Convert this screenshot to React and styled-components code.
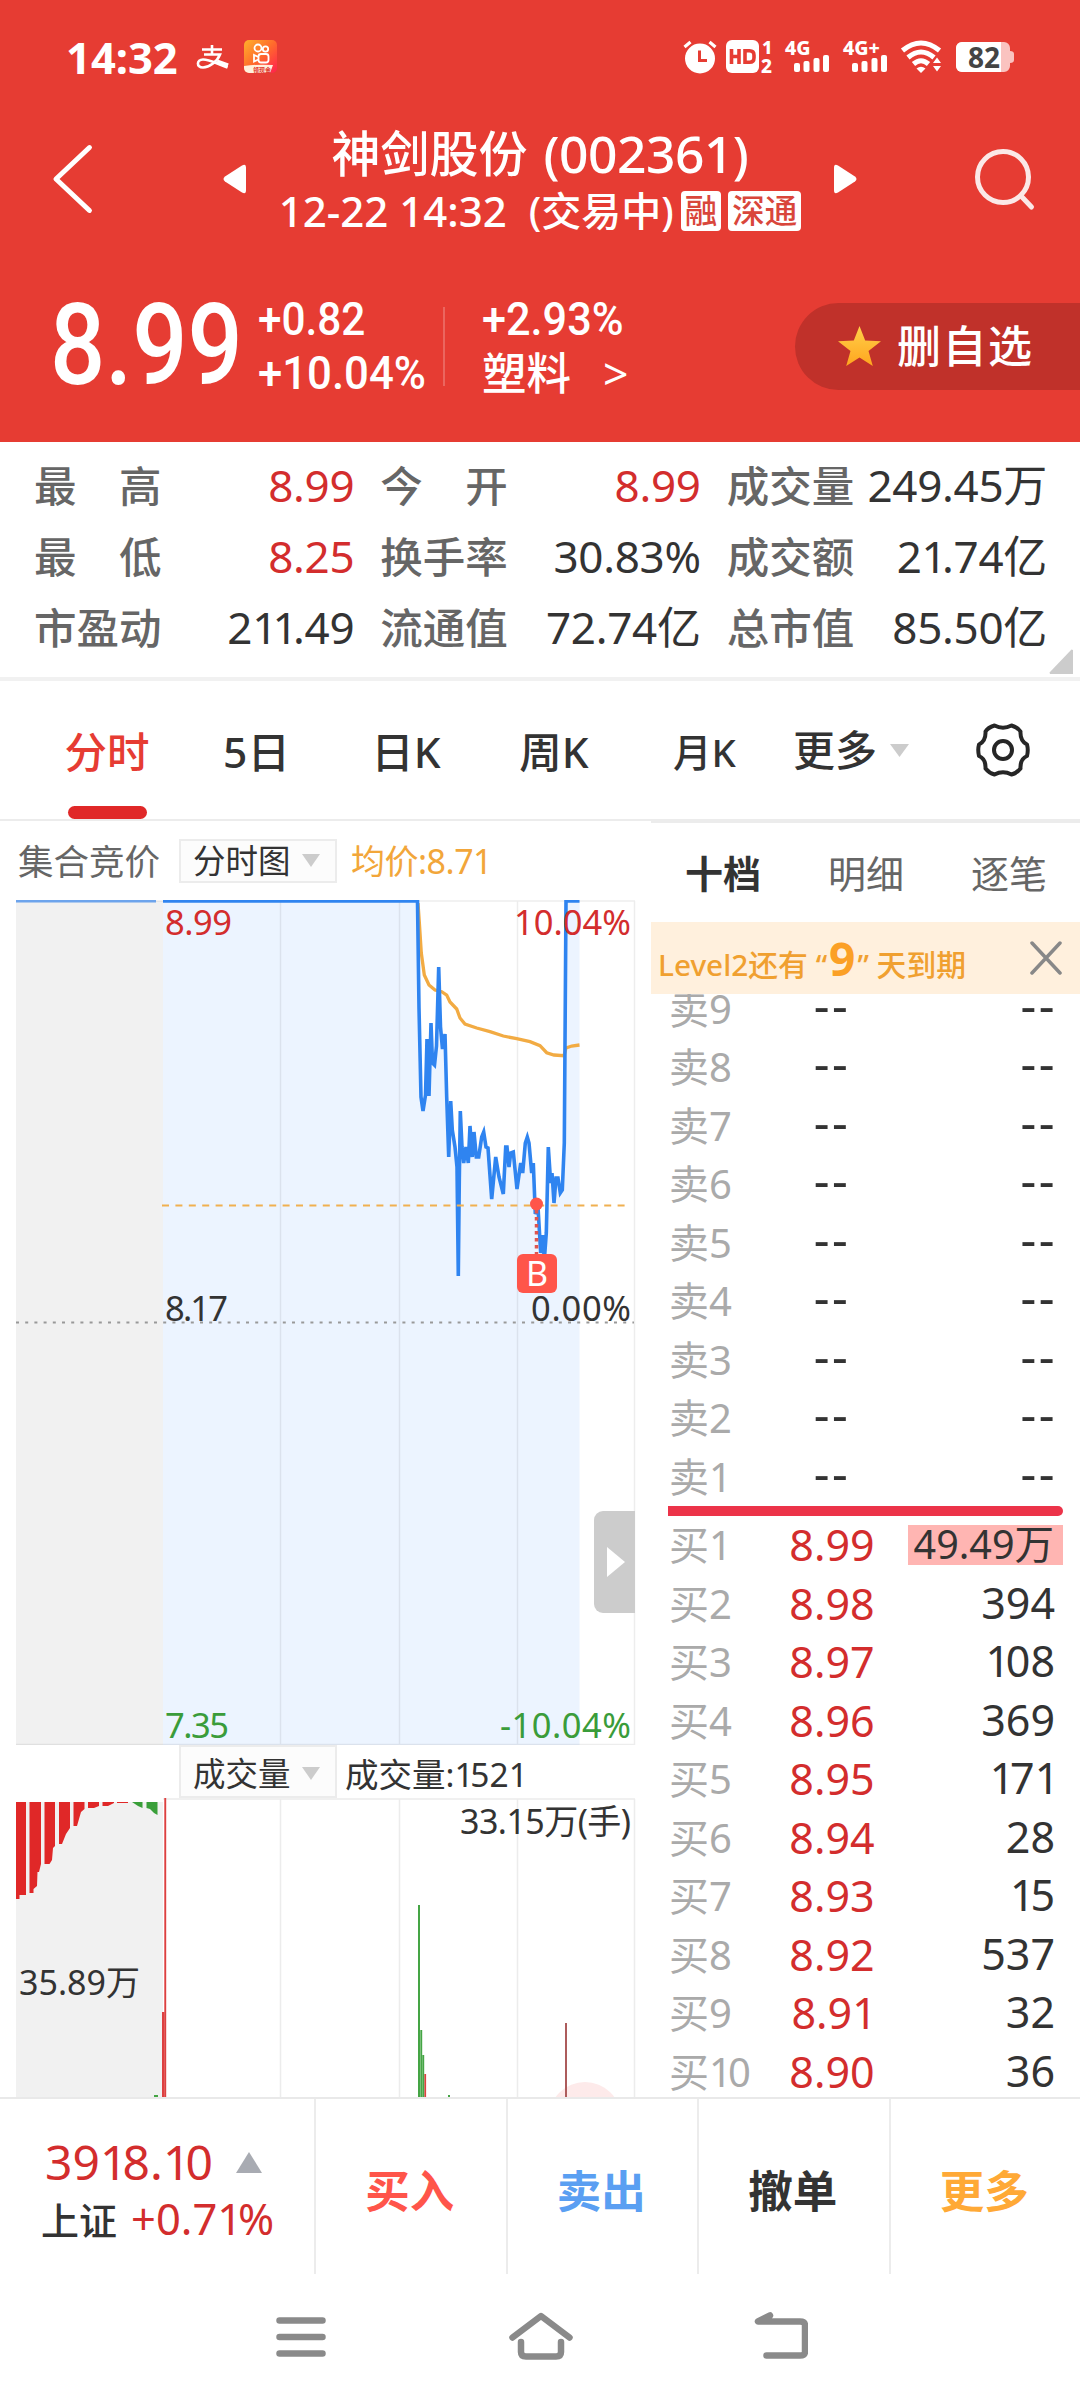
import React from "react"
import styled, { createGlobalStyle } from "styled-components"

const RED = "#d32d2d"
const GREEN = "#3a9c3a"
const INK = "#333333"
const MUTED = "#666666"

const stats = [
  { label: "最　高", value: "8.99", color: RED },
  { label: "今　开", value: "8.99", color: RED },
  { label: "成交量", value: "249.45万" },
  { label: "最　低", value: "8.25", color: RED },
  { label: "换手率", value: "30.83%" },
  { label: "成交额", value: "21.74亿" },
  { label: "市盈动", value: "211.49" },
  { label: "流通值", value: "72.74亿" },
  { label: "总市值", value: "85.50亿" },
]

const asks = ["卖9", "卖8", "卖7", "卖6", "卖5", "卖4", "卖3", "卖2", "卖1"]

const bids = [
  { label: "买1", price: "8.99", qty: "49.49万", hot: true },
  { label: "买2", price: "8.98", qty: "394" },
  { label: "买3", price: "8.97", qty: "108" },
  { label: "买4", price: "8.96", qty: "369" },
  { label: "买5", price: "8.95", qty: "171" },
  { label: "买6", price: "8.94", qty: "28" },
  { label: "买7", price: "8.93", qty: "15" },
  { label: "买8", price: "8.92", qty: "537" },
  { label: "买9", price: "8.91", qty: "32" },
  { label: "买10", price: "8.90", qty: "36" },
]

// chart series, x/y in page units; the svg viewBox starts at 16,900
const priceLine =
  "163,901 417.5,901 419,1008 421,1097 423,1111 425.5,1095 427,1039 429,1096 431,1023 432.5,1063 434.5,1065 436.5,1046 438.7,967 440.5,1027 442.5,1049 445,1034 446.7,1097 448.7,1157 450.7,1101 452.3,1130 455,1147 457,1167 458.3,1276 459.3,1180 460.3,1111 462,1147 463.7,1163 466,1147 468.3,1163 470,1126 472.3,1157 474,1132 476.3,1157 478.7,1157 481.7,1137 483.7,1132 486,1147 488,1148 491.7,1199 495.7,1157 499,1177 503.3,1194 505.7,1147 507,1147 509,1167 510.7,1153 513.3,1152 517,1189 520.7,1163 522.7,1173 525.3,1143 527.3,1137 529,1143 531.7,1173 533.3,1163 535.3,1214 538,1207 540.7,1253 542.7,1235 544.3,1260 546.3,1233 548.3,1147 550.7,1183 552,1173 554,1203 556,1178 558,1178 560.3,1193 562.3,1190 564.3,1143 566,901 579.5,901"

const avgLine =
  "418,903 419.5,925 421.3,953 424.3,975 429,985 435,990 441.7,991.7 446.7,995 450,1002 456.7,1009 460,1018 465,1024 476.7,1028 490,1031.7 503.3,1036 516.7,1038.7 530,1041.7 540,1045.7 546.7,1052.7 554,1055 564,1055.7 566,1048 571.7,1046 579.5,1045"

const auctionBars = [
  { color: "#e02828", points: "16,1802 26,1802 26,1895 19.5,1895 19.5,1899 16,1899" },
  { color: "#e02828", points: "29.5,1802 41,1802 41,1864 39,1872 37.5,1872 37,1886 33.5,1889 33.5,1893 29.5,1893" },
  { color: "#e02828", points: "44.5,1802 55,1802 55,1846 53,1848 52,1860 49.5,1864 44.5,1864" },
  { color: "#e02828", points: "59,1802 70,1802 70,1828 66,1834 62,1844 59,1844" },
  { color: "#e02828", points: "73.5,1802 84.5,1802 84.5,1809 81,1812 77,1826 73.5,1826" },
  { color: "#e02828", points: "88,1802 99,1802 99,1806 94,1808 88,1808" },
  { color: "#e02828", points: "102.5,1802 114,1802 114,1803 108,1806 102.5,1806" },
  { color: "#e02828", points: "117,1802 128,1802 128,1803 117,1803" },
  { color: "#3a9f3a", points: "132,1802 142.5,1802 142.5,1808 138,1806" },
  { color: "#3a9f3a", points: "146.5,1802 157.5,1802 157.5,1815 154,1813 150,1809 146.5,1808" },
]

// The digit 1 is set tighter than its advance width
const Digits = ({ children }) =>
  children.split(/(1)/).map((part, i) => (part === "1" ? <One key={i}>1</One> : part))

const GlobalStyle = createGlobalStyle`
  body {
    margin: 0;
    background: #ffffff;
    font-family: "Noto Sans", "Noto Sans CJK SC", sans-serif;
    font-weight: 500;
    color: ${INK};
  }
  * {
    box-sizing: border-box;
  }
`

const One = styled.span`
  margin-right: -0.1em;
`

const Screen = styled.div`
  width: 1080px;
  height: 2400px;
  overflow: hidden;
  display: flex;
  flex-direction: column;
  white-space: nowrap;
`

const Header = styled.header`
  height: 442px;
  background: #e63c33;
  color: #ffffff;
  display: flex;
  flex-direction: column;
`

const StatusBar = styled.div`
  height: 114px;
  padding: 0 66px 0 66px;
  display: flex;
  align-items: center;
`

const Clock = styled.span`
  width: 131px;
  font-size: 43.5px;
  font-weight: 700;
  line-height: 58px;
`

const StatusIcons = styled.div`
  margin-left: auto;
  display: flex;
  align-items: center;
`

const TitleBar = styled.div`
  height: 130px;
  padding: 0 44px 0 50px;
  display: flex;
  align-items: center;
`

const TitleBlock = styled.div`
  width: 587px;
  padding-top: 3px;
  display: flex;
  flex-direction: column;
  align-items: center;
`

const StockName = styled.div`
  height: 61px;
  display: flex;
  align-items: center;
  gap: 16px;
  font-size: 49px;
  line-height: 61px;
`

const StockCode = styled.span`
  font-size: 51.5px;
  letter-spacing: -0.5px;
`

const SubTitle = styled.div`
  height: 54px;
  display: flex;
  align-items: center;
  font-size: 42px;
  line-height: 54px;
`

const TradeState = styled.span`
  margin: 0 7px 0 22px;
  font-size: 40px;
`

const Badge = styled.span`
  height: 40px;
  margin-right: 7px;
  padding: 0 4px;
  border-radius: 4px;
  background: #ffffff;
  color: #d9463b;
  font-size: 32.5px;
  line-height: 39px;

  &:last-child {
    margin-right: 0;
  }
`

const PriceBar = styled.div`
  height: 86px;
  margin-top: 59px;
  display: flex;
  align-items: center;
`

const BigPrice = styled.div`
  width: 258px;
  padding-left: 50px;

  span {
    display: inline-block;
    font-family: Roboto, sans-serif;
    font-size: 113px;
    font-weight: 500;
    line-height: 88px;
    transform: scaleX(0.86);
    transform-origin: left center;
  }
`

const ChangeColumn = styled.div`
  width: ${(p) => p.$width}px;
  display: flex;
  flex-direction: column;
`

const ChangeLine = styled.span`
  height: 54px;
  font-family: Roboto, "Noto Sans CJK SC", sans-serif;
  font-size: 46.5px;
  font-weight: 500;
  line-height: 54px;
  transform: scaleX(${(p) => p.$stretch});
  transform-origin: left center;
`

const Sector = styled.span`
  height: 54px;
  display: flex;
  gap: 32px;
  font-size: 44.5px;
  line-height: 54px;

  span {
    font-weight: 400;
  }
`

const HeaderRule = styled.span`
  width: 2px;
  height: 79px;
  margin-right: 37px;
  background: rgba(255, 255, 255, 0.22);
`

const FavoriteButton = styled.button`
  width: 285px;
  height: 87px;
  margin-left: auto;
  padding: 0 0 0 43px;
  border: 0;
  border-radius: 44px 0 0 44px;
  background: #c0312a;
  color: #ffffff;
  display: flex;
  align-items: center;
  gap: 16px;
  font-family: inherit;
  font-size: 44px;
  font-weight: 500;
  letter-spacing: 1.5px;
  line-height: 60px;
`

const StatsPanel = styled.section`
  height: 239px;
  padding: 8px 33px 0 34px;
  border-bottom: 4px solid #f1f1f1;
  display: grid;
  grid-template-columns: repeat(3, 1fr);
  grid-auto-rows: 71px;
  column-gap: 26px;
  position: relative;
`

const StatCell = styled.div`
  display: flex;
  align-items: center;
  justify-content: space-between;
  line-height: 71px;
`

const StatLabel = styled.span`
  color: ${MUTED};
  font-size: 42.5px;
`

const StatValue = styled.span`
  color: ${(p) => p.$color || INK};
  font-size: 44px;
  font-weight: 400;
  letter-spacing: -0.3px;
`

const Corner = styled.svg`
  position: absolute;
  right: 7px;
  bottom: 3px;
`

const PeriodTabs = styled.nav`
  height: 140px;
  padding-left: 32px;
  border-bottom: 2px solid #ececec;
  display: flex;
`

const PeriodTab = styled.span`
  width: ${(p) => p.$width || 150}px;
  display: flex;
  flex-direction: column;
  align-items: center;
  color: ${(p) => (p.$active ? "#e63c33" : INK)};
  font-size: ${(p) => p.$size || 42.5}px;
  line-height: 142px;
`

const TabLine = styled.span`
  width: 79px;
  height: 13px;
  margin-top: -17px;
  border-radius: 7px;
  background: #e02828;
`

const MoreTab = styled.span`
  width: 138px;
  margin-left: 11px;
  display: flex;
  align-items: center;
  gap: 13px;
  font-size: 42px;
  line-height: 142px;
`

const SettingsTab = styled.span`
  margin: 41px 0 0 44px;
`

const Body = styled.main`
  height: 1276px;
  display: flex;
`

const ChartColumn = styled.section`
  width: 651px;
  overflow: hidden;
  position: relative;
`

const ChartToolbar = styled.div`
  height: 79px;
  padding-left: 18px;
  display: flex;
  align-items: center;
`

const AuctionTitle = styled.span`
  width: 161px;
  color: ${MUTED};
  font-size: 35.5px;
  font-weight: 400;
  line-height: 46px;
`

const Select = styled.span`
  width: 158px;
  height: ${(p) => p.$height}px;
  padding: ${(p) => p.$shift || 0}px 15px 0 12px;
  border: 2px solid #ececec;
  background: #fcfcfc;
  display: flex;
  align-items: center;
  justify-content: space-between;
  font-size: 32.5px;
  font-weight: 400;
  line-height: 42px;
`

const AvgPrice = styled.span`
  margin-left: 14px;
  color: #f2a63a;
  font-size: 34px;
  font-weight: 400;
  line-height: 46px;
  letter-spacing: -0.5px;
`

const VolumeToolbar = styled.div`
  height: 53px;
  padding-left: 179px;
  display: flex;
  align-items: center;
`

const VolumeText = styled.span`
  margin: 5px 0 0 8px;
  font-size: 33.5px;
  font-weight: 400;
  line-height: 46px;
`

const ChartSvg = styled.svg`
  display: block;
  margin-left: 16px;
  overflow: hidden;
  font-weight: 400;
`

const Expander = styled.button`
  position: absolute;
  left: 594px;
  top: 690px;
  width: 41px;
  height: 102px;
  padding: 0 0 0 13px;
  border: 0;
  border-radius: 9px 0 0 9px;
  background: #cccccc;
  display: flex;
  align-items: center;
`

const OrderBook = styled.section`
  width: 429px;
  height: 1276px;
  overflow: hidden;
  display: flex;
  flex-direction: column;
`

const BookTabs = styled.div`
  height: 101px;
  padding: 0 0 0 34px;
  border-top: 2px solid #ececec;
  display: flex;
`

const BookTab = styled.span`
  width: 143px;
  flex-shrink: 0;
  color: ${(p) => (p.$active ? INK : MUTED)};
  font-size: 38px;
  font-weight: ${(p) => (p.$active ? 700 : 400)};
  line-height: 101px;
`

const Notice = styled.div`
  height: 72px;
  flex-shrink: 0;
  padding: 0 18px 0 7px;
  background: #fff0dd;
  color: #f0a030;
  display: flex;
  align-items: center;
  justify-content: space-between;
  font-size: 29.8px;

  p {
    margin: 6px 0 0;
    line-height: 60px;
  }

  b {
    margin: 0 2px;
    color: #fba026;
    font-size: 46px;
    line-height: 60px;
  }
`

const AskList = styled.div`
  height: 512px;
  overflow: hidden;
  flex-shrink: 0;
  display: flex;
  flex-direction: column;
  justify-content: flex-end;
`

const BookRow = styled.div`
  height: 58.5px;
  flex-shrink: 0;
  padding: 0 17px 0 18px;
  display: grid;
  grid-template-columns: 110px 106px 1fr;
  align-items: center;
  line-height: 58px;
`

const Level = styled.span`
  color: #aaaaaa;
  font-size: 40px;
  font-weight: 400;
`

const Price = styled.span`
  color: ${RED};
  font-size: 43px;
  font-weight: 400;
  text-align: center;
`

const Quantity = styled.span`
  justify-self: end;
  height: 40px;
  padding: 0 ${(p) => (p.$hot ? 9 : 8)}px 0 6px;
  background: ${(p) => (p.$hot ? "#ffb5b2" : "none")};
  font-size: ${(p) => (p.$hot ? 39.5 : 43)}px;
  font-weight: 400;
  line-height: 38px;
`

const Blank = styled.span`
  justify-self: ${(p) => p.$align};
  padding: 0 ${(p) => (p.$align === "end" ? 6 : 0)}px 9px 0;
  font-size: 49px;
  font-weight: 400;
  line-height: 45px;
  letter-spacing: 2.5px;
`

const Spread = styled.div`
  height: 10px;
  flex-shrink: 0;
  margin: 0 17px 0;
  border-radius: 0 5px 5px 0;
  background: #ec3349;
`

const TradeBar = styled.footer`
  height: 177px;
  border-top: 2px solid #e9e9e9;
  display: flex;
`

const IndexCell = styled.div`
  width: 314px;
  padding: 35px 0 0 45px;
`

const IndexValue = styled.div`
  display: flex;
  align-items: center;
  gap: 23px;
  color: ${RED};
  font-size: 48px;
  font-weight: 400;
  line-height: 56px;
`

const IndexChange = styled.div`
  margin-left: -4px;
  font-size: 38px;
  line-height: 57px;

  > span {
    margin-left: 14px;
    color: ${RED};
    font-size: 43.5px;
    font-weight: 400;
  }
`

const TradeButton = styled.button`
  flex: 1;
  padding: 4px 2px 0 0;
  border: 0;
  border-left: 2px solid #ececec;
  background: none;
  color: ${(p) => p.$color};
  font-family: inherit;
  font-size: 44.5px;
  font-weight: 700;
`

const NavBar = styled.div`
  height: 125px;
  padding-left: 276px;
  display: flex;
  align-items: center;
`

const NavIcon = styled.svg`
  margin-right: ${(p) => p.$gap || 0}px;
  fill: none;
  stroke: #8a8a8a;
  stroke-width: 6.5;
  stroke-linecap: round;
  stroke-linejoin: round;
`

const StatusIcon = styled.svg`
  margin-left: ${(p) => p.$gap || 0}px;
  overflow: visible;
`

const SignalText = styled.text`
  fill: #ffffff;
  font-family: "Noto Sans", sans-serif;
  font-weight: 800;
`

const AlipayIcon = () => (
  <StatusIcon width="32" height="26" viewBox="0 0 32 26" fill="none" stroke="#fff">
    <path d="M5 5.5h20M15 1v9" strokeWidth="2.6" />
    <path d="M7 10.5h16C20 18 12 23.5 6 23.5c-7 0-6.5-8 0-8 7 0 13 4 24.5 8" strokeWidth="2.6" />
    <path d="M20 17.5l11 4" strokeWidth="4" />
  </StatusIcon>
)

const KuaishouIcon = () => (
  <StatusIcon $gap={15} width="34" height="34" viewBox="0 0 34 34">
    <defs>
      <linearGradient id="ks" x1="0" y1="0" x2="1" y2="1">
        <stop offset="0" stopColor="#ffb12b" />
        <stop offset="0.5" stopColor="#ff6a2c" />
        <stop offset="1" stopColor="#ff1f4f" />
      </linearGradient>
    </defs>
    <rect width="33" height="33" rx="5" fill="url(#ks)" />
    <path d="M0 26q14-2 29-1l-3 8H5a5 5 0 0 1-5-5z" fill="#fff0dc" />
    <g fill="none" stroke="#fff" strokeWidth="1.8">
      <circle cx="14" cy="8" r="3.5" />
      <circle cx="21.5" cy="9" r="2.7" />
      <rect x="14.5" y="14" width="10" height="8.5" rx="2.5" />
      <path d="M14.5 17l-4.5-2v6.5l4.5-2" />
    </g>
    <text x="9" y="31.5" fontSize="6" fontWeight="700" fill="#e0352b" fontFamily="Noto Sans CJK SC">领现金</text>
  </StatusIcon>
)

const Alarm = () => (
  <StatusIcon width="34" height="34" viewBox="0 0 34 34" fill="none" stroke="#fff">
    <circle cx="17" cy="18.5" r="15" fill="#fff" stroke="none" />
    <path d="M1.5 7l6-5M32.5 7l-6-5" strokeWidth="3.2" />
    <path d="M16.5 10.5v10h7.5" stroke="#e63c33" strokeWidth="3" />
  </StatusIcon>
)

const HdBadge = () => (
  <StatusIcon $gap={9} width="48" height="36" viewBox="0 0 48 36">
    <rect x="0" y="1" width="33" height="33" rx="6" fill="#fff" />
    <g fill="none" stroke="#e63c33" strokeWidth="3.6">
      <path d="M5.5 10v15M13 10v15M5.5 17.5h7.5M19 11.8h4.5q4.500 0 4.500 4.500v2.500q0 4.500-4.500 4.500h-4.500z" />
    </g>
    <SignalText x="36" y="14.5" fontSize="18">1</SignalText>
    <SignalText x="35" y="34" fontSize="19">2</SignalText>
  </StatusIcon>
)

const Signal = ({ label }) => (
  <StatusIcon $gap={11} width="47" height="34" viewBox="0 0 47 34">
    <SignalText x="0" y="15" fontSize="19.5">{label}</SignalText>
    <g fill="#fff">
      <rect x="9" y="23" width="6" height="9" rx="2" />
      <rect x="18.5" y="21" width="6" height="11" rx="2" />
      <rect x="28.5" y="18" width="6" height="14" rx="2" />
      <rect x="38" y="15" width="6" height="17" rx="2" />
    </g>
  </StatusIcon>
)

const Wifi = () => (
  <StatusIcon $gap={11} width="42" height="34" viewBox="0 0 42 34" fill="none" stroke="#fff" strokeWidth="5">
    <path d="M1.5 10.5q18.5-15 37 0M7 17.5q13-11 26 0M12.5 24q7.5-6.5 15 0" />
    <path d="M20 33l-4.500-4.500q4.500-3.500 9 0z" fill="#fff" stroke="none" />
    <path d="M32 23l4-5.500 4 5.500zM32 26l4 5.500 4-5.500z" fill="#fff" stroke="none" />
  </StatusIcon>
)

const Battery = () => (
  <StatusIcon $gap={12} width="59" height="31" viewBox="0 0 59 31">
    <path d="M7 0h42a6 6 0 0 1 6 6v3q4 0 4 3v6q0 3-4 3v3a6 6 0 0 1-6 6H7a6 6 0 0 1-6-6V6a6 6 0 0 1 6-6z" fill="#fac3c0" />
    <path d="M7 0h39v30H7a6 6 0 0 1-6-6V6a6 6 0 0 1 6-6z" fill="#fff" />
    <text x="13" y="25.5" fontSize="28" fontWeight="700" fill="#444">82</text>
  </StatusIcon>
)

const DownTriangle = ({ width, height }) => (
  <svg width={width} height={height} viewBox="0 0 18 13" preserveAspectRatio="none">
    <path d="M0 0h18L9 13z" fill="#cccccc" />
  </svg>
)

const Gear = () => (
  <svg width="56" height="56" viewBox="-28 -28 56 56" fill="none" stroke="#262626" strokeWidth="4">
    <path
      strokeLinejoin="round"
      d="M-8.5 -24.5Q0 -20 8.5 -24.5Q15 -22.5 17.5 -18.5Q17 -9 24 -5.5Q25.5 0 24 6Q17 9 17.5 18.5Q14 23 8.5 24.5Q0 20 -8.5 24.5Q-14 23 -17.5 18.5Q-17 9 -24 6Q-25.5 0 -24 -5.5Q-17 -9 -17.5 -18.5Q-15 -22.5 -8.5 -24.5Z"
    />
    <circle r="9" />
  </svg>
)

const PriceChart = () => (
  <ChartSvg width="620" height="845" viewBox="16 900 620 845" fontSize="34.5">
    <rect x="16" y="901" width="147" height="844" fill="#f1f1f1" />
    <polygon points={`163,1745 ${priceLine} 579.5,1745`} fill="#ecf4ff" />
    <g stroke="#000" strokeOpacity="0.07" strokeWidth="1.5">
      <path d="M16 901H635M16 1744.5H635M280.5 901V1745M399.5 901V1745M517.5 901V1745M634.5 901V1745" />
    </g>
    <path d="M16 1322.5H634" stroke="#999" strokeWidth="2" strokeDasharray="3 6.2" />
    <path d="M16 901H156" stroke="#6da4ec" strokeWidth="3" />
    <polyline points={avgLine} fill="none" stroke="#f2ab43" strokeWidth="3.3" />
    <polyline points={priceLine} fill="none" stroke="#2f84f0" strokeWidth="3.6" />
    <text x="165" y="935" fill={RED} textLength="67">8.99</text>
    <text x="514" y="935" fill={RED} textLength="117">10.04%</text>
    <text x="165" y="1321" fill={INK} textLength="63">8.17</text>
    <text x="531" y="1321" fill={INK} textLength="100">0.00%</text>
    <text x="165" y="1738" fill={GREEN} textLength="64">7.35</text>
    <text x="500" y="1738" fill={GREEN} textLength="131">-10.04%</text>
    <path d="M162 1205.5H631" stroke="#f0b050" strokeWidth="2" strokeDasharray="7 6.4" />
    <circle cx="536.5" cy="1204" r="6.5" fill="#ff554a" />
    <path d="M536.5 1210V1254" stroke="#e0554f" strokeWidth="3.5" strokeDasharray="3.5 3.5" />
    <rect x="517" y="1254" width="40" height="39" rx="6" fill="#ff554a" />
    <text x="537" y="1286" fill="#fff" fontSize="34" textAnchor="middle">B</text>
  </ChartSvg>
)

const VolumeChart = () => (
  <ChartSvg width="620" height="299" viewBox="16 1798 620 299" fontSize="34">
    <rect x="16" y="1802" width="147" height="300" fill="#f1f1f1" />
    <path d="M163 1799H635M280.5 1799V2100M399.5 1799V2100M517.5 1799V2100M634.5 1799V2100" stroke="#ececec" strokeWidth="1.5" />
    {auctionBars.map((bar) => (
      <polygon key={bar.points} points={bar.points} fill={bar.color} />
    ))}
    <circle cx="585" cy="2118" r="36" fill="#fdeaea" />
    <g fill="#dd4040">
      <rect x="162" y="2012" width="2.5" height="90" />
      <rect x="164.3" y="1798" width="1.9" height="304" />
      <rect x="424.3" y="2074" width="1.8" height="28" />
    </g>
    <g fill="#45a545">
      <rect x="418" y="1905" width="2" height="200" />
      <rect x="420.3" y="2030" width="1.9" height="80" />
      <rect x="422.3" y="2055" width="1.9" height="50" />
      <rect x="154" y="2095" width="4" height="2" />
      <rect x="448" y="2095" width="2" height="3" />
    </g>
    <rect x="565" y="2023" width="2" height="80" fill="#ad5c5c" />
    <text x="460" y="1834" fill={INK} textLength="171">33.15万(手)</text>
    <text x="19" y="1995" fill={INK} textLength="121">35.89万</text>
  </ChartSvg>
)

const App = () => {
  return (
    <Screen>
      <GlobalStyle />
      <Header>
        <StatusBar>
          <Clock>14:32</Clock>
          <AlipayIcon />
          <KuaishouIcon />
          <StatusIcons>
            <Alarm />
            <HdBadge />
            <Signal label="4G" />
            <Signal label="4G+" />
            <Wifi />
            <Battery />
          </StatusIcons>
        </StatusBar>
        <TitleBar>
          <svg width="46" height="70" viewBox="0 0 46 70" fill="none" stroke="#fff" strokeWidth="5">
            <path d="M39.5 3.5L6 35l33.5 31.5" strokeLinecap="round" strokeLinejoin="round" />
          </svg>
          <StatusIcon $gap={126} width="25" height="32" viewBox="0 0 25 32" fill="#fff">
            <path d="M20 2.5Q24 0 24 5v22q0 5-4 2.5L3 18.5q-3-2.5 0-5z" />
          </StatusIcon>
          <TitleBlock>
            <StockName>
              神剑股份<StockCode>(002361)</StockCode>
            </StockName>
            <SubTitle>
              12-22 14:32
              <TradeState>(交易中)</TradeState>
              <Badge>融</Badge>
              <Badge>深通</Badge>
            </SubTitle>
          </TitleBlock>
          <svg width="25" height="32" viewBox="0 0 25 32" fill="#fff">
            <path d="M5 2.5Q1 0 1 5v22q0 5 4 2.5L22 18.5q3-2.5 0-5z" />
          </svg>
          <StatusIcon $gap={114} width="64" height="64" viewBox="0 0 64 64" fill="none" stroke="#fbe8e7" strokeWidth="5">
            <circle cx="31" cy="30" r="25.5" />
            <path d="M50 50l9.5 10" strokeLinecap="round" />
          </StatusIcon>
        </TitleBar>
        <PriceBar>
          <BigPrice>
            <span>8.99</span>
          </BigPrice>
          <ChangeColumn $width={185}>
            <ChangeLine $stretch={0.91}>+0.82</ChangeLine>
            <ChangeLine $stretch={0.94}>+10.04%</ChangeLine>
          </ChangeColumn>
          <HeaderRule />
          <ChangeColumn $width={150}>
            <ChangeLine $stretch={0.93}>+2.93%</ChangeLine>
            <Sector>
              塑料<span>&gt;</span>
            </Sector>
          </ChangeColumn>
          <FavoriteButton>
            <svg width="43" height="41" viewBox="0 0 43 41">
              <defs>
                <linearGradient id="star" x1="0" y1="0" x2="0" y2="1">
                  <stop offset="0" stopColor="#ffd04a" />
                  <stop offset="1" stopColor="#ffa51e" />
                </linearGradient>
              </defs>
              <path d="M21.5 0l5.7 14.5L43 15.3 30.5 25l4.3 15-13.3-8.5L8.2 40l4.3-15L0 15.3l15.8-.8z" fill="url(#star)" />
            </svg>
            删自选
          </FavoriteButton>
        </PriceBar>
      </Header>

      <StatsPanel>
        {stats.map((item) => (
          <StatCell key={item.label}>
            <StatLabel>{item.label}</StatLabel>
            <StatValue $color={item.color}>
              <Digits>{item.value}</Digits>
            </StatValue>
          </StatCell>
        ))}
        <Corner width="24" height="25" viewBox="0 0 24 25">
          <path d="M22.5 0.5L24 1v24H1l-.5-1.5z" fill="#cccccc" />
        </Corner>
      </StatsPanel>

      <PeriodTabs>
        <PeriodTab $active>
          分时
          <TabLine />
        </PeriodTab>
        <PeriodTab $width={149}>5日</PeriodTab>
        <PeriodTab>日K</PeriodTab>
        <PeriodTab $width={146}>周K</PeriodTab>
        <PeriodTab $width={155} $size={38.5}>月K</PeriodTab>
        <MoreTab>
          更多
          <DownTriangle width={19} height={13} />
        </MoreTab>
        <SettingsTab>
          <Gear />
        </SettingsTab>
      </PeriodTabs>

      <Body>
        <ChartColumn>
          <ChartToolbar>
            <AuctionTitle>集合竞价</AuctionTitle>
            <Select $height={44}>
              分时图
              <DownTriangle width={18} height={13} />
            </Select>
            <AvgPrice>均价:8.71</AvgPrice>
          </ChartToolbar>
          <PriceChart />
          <VolumeToolbar>
            <Select $height={53} $shift={4}>
              成交量
              <DownTriangle width={18} height={13} />
            </Select>
            <VolumeText>
              <Digits>成交量:1521</Digits>
            </VolumeText>
          </VolumeToolbar>
          <VolumeChart />
          <Expander>
            <svg width="18" height="30" viewBox="0 0 18 30">
              <path d="M0 0l18 15L0 30z" fill="#fff" />
            </svg>
          </Expander>
        </ChartColumn>

        <OrderBook>
          <BookTabs>
            <BookTab $active>十档</BookTab>
            <BookTab>明细</BookTab>
            <BookTab>逐笔</BookTab>
          </BookTabs>
          <Notice>
            <p>
              Level2还有 “<b>9</b>” 天到期
            </p>
            <svg width="32" height="34" viewBox="0 0 32 34" stroke="#888" strokeWidth="3.5">
              <path d="M2 2l28 30M30 2L2 32" strokeLinecap="round" />
            </svg>
          </Notice>
          <AskList>
            {asks.map((label) => (
              <BookRow key={label}>
                <Level>{label}</Level>
                <Blank $align="center">--</Blank>
                <Blank $align="end">--</Blank>
              </BookRow>
            ))}
          </AskList>
          <Spread />
          {bids.map((row) => (
            <BookRow key={row.label}>
              <Level>
                <Digits>{row.label}</Digits>
              </Level>
              <Price>
                <Digits>{row.price}</Digits>
              </Price>
              <Quantity $hot={row.hot}>
                <Digits>{row.qty}</Digits>
              </Quantity>
            </BookRow>
          ))}
        </OrderBook>
      </Body>

      <TradeBar>
        <IndexCell>
          <IndexValue>
            <span>
              <Digits>3918.10</Digits>
            </span>
            <svg width="26" height="21" viewBox="0 0 26 21">
              <path d="M13 0l13 21H0z" fill="#a8abb2" />
            </svg>
          </IndexValue>
          <IndexChange>
            上证
            <span>
              <Digits>+0.71%</Digits>
            </span>
          </IndexChange>
        </IndexCell>
        <TradeButton $color="#ff554a">买入</TradeButton>
        <TradeButton $color="#5a9ff2">卖出</TradeButton>
        <TradeButton $color={INK}>撤单</TradeButton>
        <TradeButton $color="#ffa936">更多</TradeButton>
      </TradeBar>

      <NavBar>
        <NavIcon width="50" height="50" viewBox="0 0 50 50" $gap={183}>
          <path d="M3.5 8.5h43M3.5 25h43M3.5 41.5h43" />
        </NavIcon>
        <NavIcon width="64" height="52" viewBox="0 0 64 52" $gap={181}>
          <path d="M3.5 26.5L32 5l28.5 21.5M12 31v10q0 4.500 5 4.500h30q5 0 5-4.500V31" />
        </NavIcon>
        <NavIcon width="54" height="52" viewBox="0 0 54 52">
          <path d="M16 4.5L4 10.5h42q5 0 5 4v26q0 4-5 4H12.5" />
        </NavIcon>
      </NavBar>
    </Screen>
  )
}

export default App
